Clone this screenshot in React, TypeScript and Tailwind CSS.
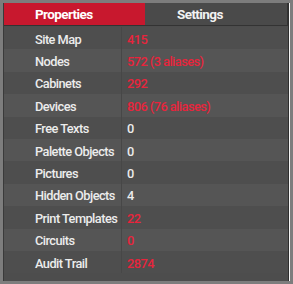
import React from "react";

const rows: { label: string; value: string; red: boolean }[] = [
  { label: "Site Map", value: "415", red: true },
  { label: "Nodes", value: "572 (3 aliases)", red: true },
  { label: "Cabinets", value: "292", red: true },
  { label: "Devices", value: "806 (76 aliases)", red: true },
  { label: "Free Texts", value: "0", red: false },
  { label: "Palette Objects", value: "0", red: false },
  { label: "Pictures", value: "0", red: false },
  { label: "Hidden Objects", value: "4", red: false },
  { label: "Print Templates", value: "22", red: true },
  { label: "Circuits", value: "0", red: true },
  { label: "Audit Trail", value: "2874", red: true },
];

export default function App() {
  return (
    <div
      className="w-[293px] h-[284px] bg-[#7d7d7d] pt-[3px] pl-[3px] overflow-hidden"
      style={{ fontFamily: "Roboto, 'Liberation Sans', sans-serif" }}
    >
      <div className="flex w-[287px] h-[278px]">
        <div className="w-[285px] h-[278px] bg-[#4d4d4d] flex flex-col border-l border-[#3a3a3a]">
          <div className="flex h-[23px] border-b border-[#333333]">
            <div className="w-[141px] bg-[#c8182e] text-white text-[13.5px] font-bold flex items-center pl-[31px] tracking-[-0.6px]">
              Properties
            </div>
            <div className="flex-1 bg-[#4a4a4a] text-[#f2f2f2] text-[13.5px] font-bold flex items-center pl-[32px] tracking-[-0.6px] border-r border-[#333333]">
              Settings
            </div>
          </div>
          <div className="flex flex-col pt-[1px]">
            {rows.map((r, i) => (
              <div
                key={r.label}
                className={`flex h-[22.4px] items-center text-[12.8px] tracking-[-0.55px] whitespace-nowrap font-medium ${
                  i % 2 === 0 ? "bg-[#4e4e4e]" : "bg-[#555555]"
                }`}
              >
                <div className="w-[118px] pl-[31px] pt-[2px] text-[#ececec] h-full flex items-center border-r border-[#474747]">
                  {r.label}
                </div>
                <div
                  className={`pl-[5px] pt-[2px] h-full flex items-center ${
                    r.red ? "text-[#e8243c]" : "text-[#ececec]"
                  }`}
                >
                  {r.value}
                </div>
              </div>
            ))}
          </div>
        </div>
        <div className="w-[1px] h-[278px] bg-[#2e2e2e]" />
        <div className="w-[1px] h-[278px] bg-[#f4f4f4]" />
      </div>
    </div>
  );
}
